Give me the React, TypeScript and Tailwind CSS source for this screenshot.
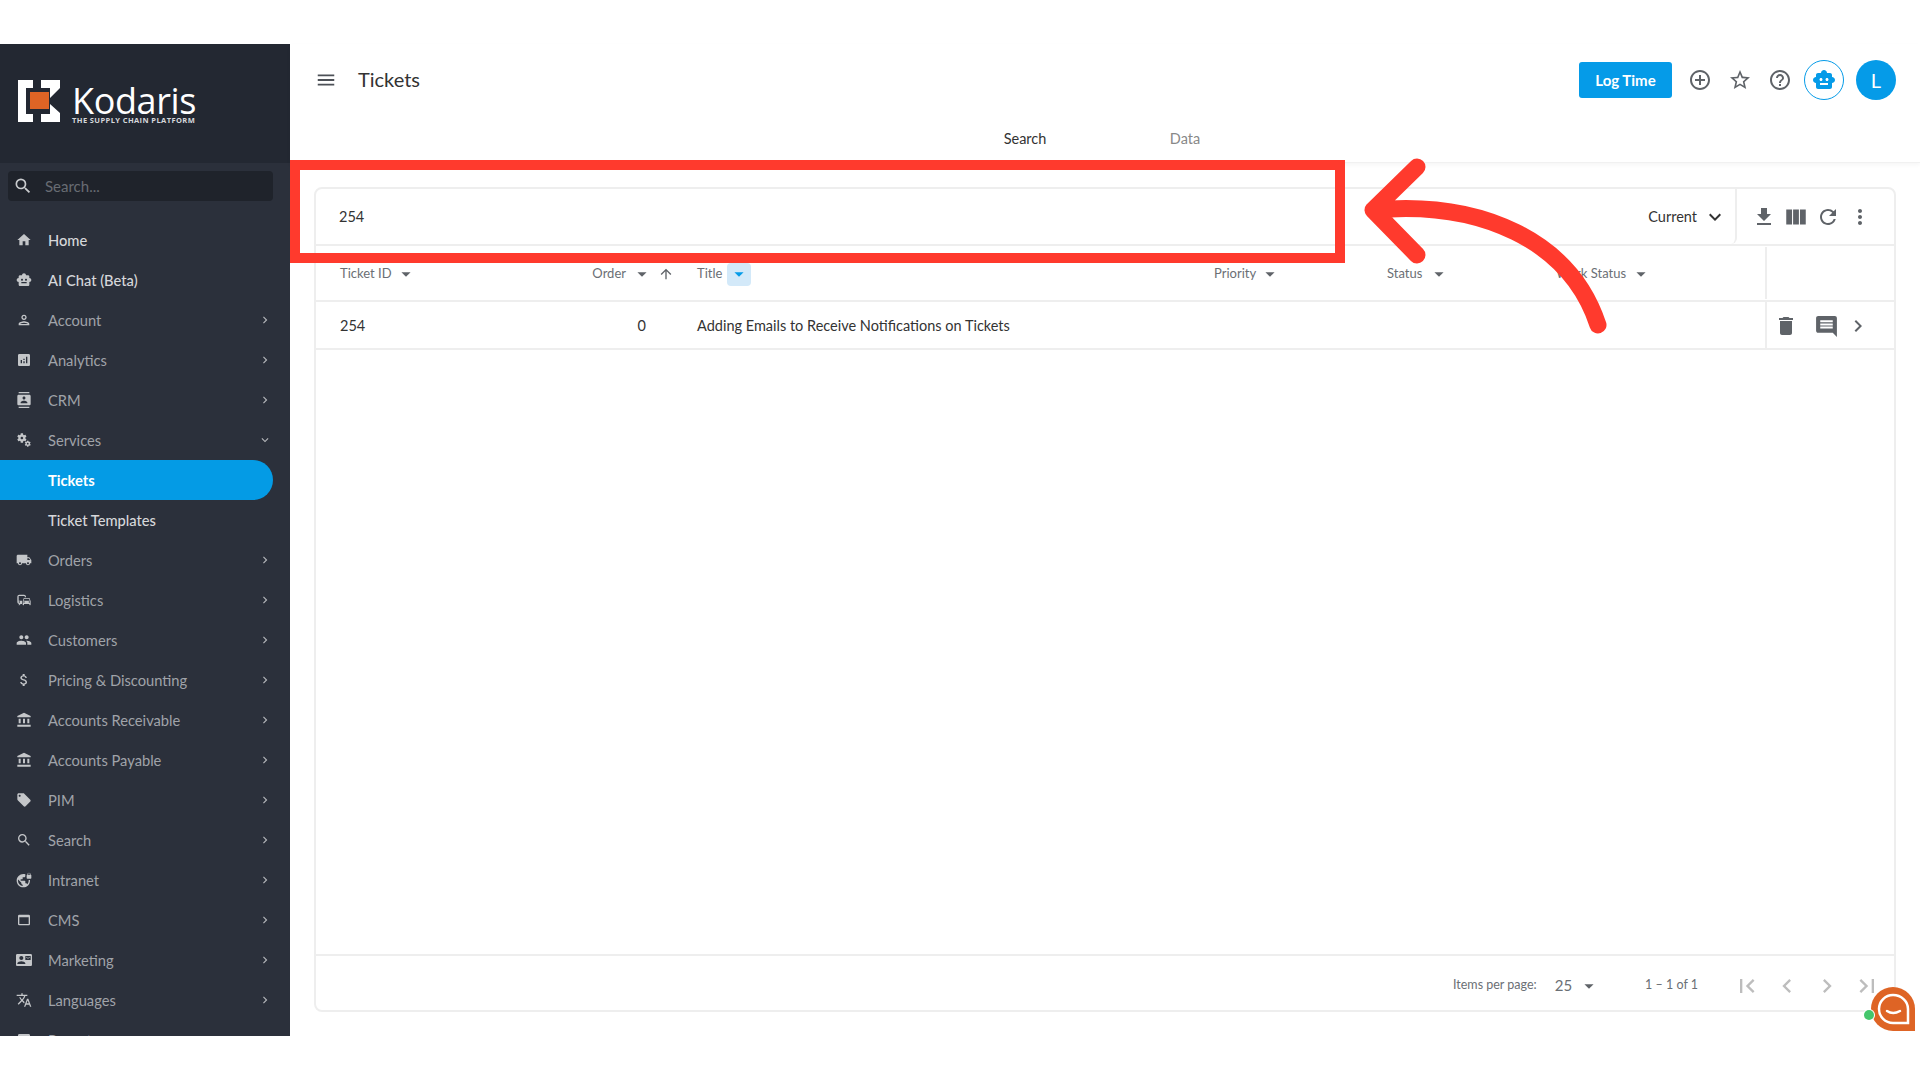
import {
  MdAccountBalance,
  MdAddCircleOutline,
  MdAnalytics,
  MdArrowDropDown,
  MdArrowUpward,
  MdAttachMoney,
  MdChevronLeft,
  MdChevronRight,
  MdComment,
  MdCommute,
  MdContactMail,
  MdContacts,
  MdDelete,
  MdFileDownload,
  MdFirstPage,
  MdHelpOutline,
  MdHome,
  MdKeyboardArrowDown,
  MdLastPage,
  MdLocalOffer,
  MdLocalShipping,
  MdMenu,
  MdMiscellaneousServices,
  MdMoreVert,
  MdOutlinePerson,
  MdOutlineWebAsset,
  MdPeople,
  MdRefresh,
  MdSearch,
  MdSmartToy,
  MdStarBorder,
  MdTranslate,
  MdViewColumn,
  MdVpnLock,
} from "react-icons/md";
import type { IconType } from "react-icons";

type NavItem = { label: string; icon?: IconType; strong?: boolean; active?: boolean; open?: boolean; arrow?: boolean };

const nav: NavItem[] = [
  { label: "Home", icon: MdHome, strong: true },
  { label: "AI Chat (Beta)", icon: MdSmartToy, strong: true },
  { label: "Account", icon: MdOutlinePerson, arrow: true },
  { label: "Analytics", icon: MdAnalytics, arrow: true },
  { label: "CRM", icon: MdContacts, arrow: true },
  { label: "Services", icon: MdMiscellaneousServices, arrow: true, open: true },
  { label: "Tickets", active: true },
  { label: "Ticket Templates", strong: true },
  { label: "Orders", icon: MdLocalShipping, arrow: true },
  { label: "Logistics", icon: MdCommute, arrow: true },
  { label: "Customers", icon: MdPeople, arrow: true },
  { label: "Pricing & Discounting", icon: MdAttachMoney, arrow: true },
  { label: "Accounts Receivable", icon: MdAccountBalance, arrow: true },
  { label: "Accounts Payable", icon: MdAccountBalance, arrow: true },
  { label: "PIM", icon: MdLocalOffer, arrow: true },
  { label: "Search", icon: MdSearch, arrow: true },
  { label: "Intranet", icon: MdVpnLock, arrow: true },
  { label: "CMS", icon: MdOutlineWebAsset, arrow: true },
  { label: "Marketing", icon: MdContactMail, arrow: true },
  { label: "Languages", icon: MdTranslate, arrow: true },
  { label: "Reports", icon: MdAnalytics, arrow: true },
];

function Logo() {
  return (
    <div className="flex items-start pl-[18px] pt-[36px]">
      <svg width="44" height="43" viewBox="0 0 44 43">
        <path fill="#fff" d="M0 0H15V8H8V34H15V42H0Z" />
        <path fill="#fff" d="M23 0H42V8L32 18V8H23Z" />
        <path fill="#fff" d="M32 24L42 33V42H23V34H32Z" />
        <rect x="12" y="12" width="19" height="17" fill="#de6425" />
      </svg>
      <div className="ml-[10px] mt-[6px] flex flex-col">
        <span className="text-[36px] leading-[30px] text-white tracking-[-0.4px] [font-family:'Open_Sans',sans-serif]">Kodaris</span>
        <span className="text-[7.5px] leading-[8px] font-bold text-[#d5d7da] tracking-[0.4px] whitespace-nowrap [font-family:'Open_Sans',sans-serif]">THE SUPPLY CHAIN PLATFORM</span>
      </div>
    </div>
  );
}

function Sidebar() {
  return (
    <aside className="w-[290px] h-full shrink-0 bg-[#2b303b] overflow-hidden">
      <div className="h-[119px] bg-[#232832]">
        <Logo />
      </div>
      <div className="mx-[8px] mt-[8px] mb-[19px] h-[30px] w-[265px] rounded bg-[#1f232b] flex items-center">
        <MdSearch className="ml-[5px] text-[20px] text-[#c9cbce]" />
        <span className="ml-[12px] text-[15px] text-[#686c73]">Search...</span>
      </div>
      {nav.map((item) => {
        const Icon = item.icon;
        return (
          <div
            key={item.label}
            className={
              item.active
                ? "h-[40px] w-[273px] flex items-center rounded-r-full bg-[#049be5] text-white font-bold"
                : item.strong
                  ? "h-[40px] w-[273px] flex items-center text-[#d6d7da] font-medium"
                  : "h-[40px] w-[273px] flex items-center text-[#a0a3a9]"
            }
          >
            <div className="w-[48px] pl-[16px] shrink-0">
              {Icon && <Icon className="text-[16px] text-[#c4c6c9]" />}
            </div>
            <span className="flex-1 pt-[1px] text-[14.7px] whitespace-nowrap">{item.label}</span>
            {item.arrow &&
              (item.open ? (
                <MdKeyboardArrowDown className="text-[14px] text-[#b4b6ba] mr-[1px]" />
              ) : (
                <MdChevronRight className="text-[14px] text-[#b4b6ba] mr-[1px]" />
              ))}
          </div>
        );
      })}
    </aside>
  );
}

function Header() {
  return (
    <header className="h-[119px] shrink-0 border-b border-[#f1f1f1] shadow-[0_2px_4px_rgba(0,0,0,0.04)]">
      <div className="h-[72px] flex items-center pl-[25px] pr-[24px]">
        <MdMenu className="text-[22px] text-[#4d5157]" />
        <h1 className="ml-[21px] mb-[2px] text-[20px] text-[#333] flex-1">Tickets</h1>
        <button className="h-[36px] w-[93px] rounded-[3px] bg-[#059be8] text-white text-[15px] font-bold">Log Time</button>
        <div className="ml-[8px] w-[40px] flex justify-center"><MdAddCircleOutline className="text-[24px] text-[#5f6368]" /></div>
        <div className="w-[40px] flex justify-center"><MdStarBorder className="text-[24px] text-[#5f6368]" /></div>
        <div className="w-[40px] flex justify-center"><MdHelpOutline className="text-[24px] text-[#5f6368]" /></div>
        <div className="ml-[4px] h-[40px] w-[40px] rounded-full border border-[#059be8] flex items-center justify-center">
          <MdSmartToy className="text-[24px] text-[#059be8]" />
        </div>
        <div className="ml-[12px] h-[40px] w-[40px] rounded-full bg-[#059be8] text-white text-[20px] flex items-center justify-center">L</div>
      </div>
      <div className="h-[46px] flex items-center text-[14.5px]">
        <div className="ml-[675px] w-[120px] text-center text-[#333]">Search</div>
        <div className="ml-[40px] w-[120px] text-center text-[#888]">Data</div>
      </div>
    </header>
  );
}

const columns = "grid grid-cols-[211px_161px_516px_174px_168px_219px_129px]";

function HeadCell({ label, className, gap }: { label: string; className?: string; gap: string }) {
  return (
    <div className={`flex items-center ${className ?? ""}`}>
      <span>{label}</span>
      <MdArrowDropDown className={`text-[22px] text-[#5f6368] ${gap}`} />
    </div>
  );
}

function Card() {
  return (
    <section className="mt-[24px] ml-[24px] w-[1582px] h-[825px] border-2 border-[#eeeeee] rounded-lg flex flex-col">
      {/* toolbar */}
      <div className="h-[57px] shrink-0 flex border-b-2 border-[#eeeeee]">
        <div className="flex-1 flex items-center pt-[1px] pl-[23px] pr-[8px] border-r-2 border-[#eeeeee] rounded-br-md text-[14.5px] text-[#333]">
          <span className="flex-1">254</span>
          <span>Current</span>
          <MdKeyboardArrowDown className="ml-[6px] text-[24px] text-[#333]" />
        </div>
        <div className="w-[157px] flex items-center pt-[1px] pl-[11px] text-[#5f6368]">
          <MdFileDownload className="text-[24px] w-[32px]" />
          <MdViewColumn className="text-[26px] w-[32px]" />
          <MdRefresh className="text-[24px] w-[32px]" />
          <MdMoreVert className="text-[24px] w-[32px]" />
        </div>
      </div>
      {/* column headers */}
      <div className={`${columns} h-[56px] shrink-0 items-center pt-[2px] border-b-2 border-[#eeeeee] text-[13px] text-[#6b6f75]`}>
        <HeadCell label="Ticket ID" className="pl-[24px]" gap="ml-[3px]" />
        <div className="flex items-center justify-end pr-[14px]">
          <span>Order</span>
          <MdArrowDropDown className="ml-[5px] text-[22px] text-[#5f6368]" />
          <MdArrowUpward className="ml-[5px] text-[16px] text-[#5f6368]" />
        </div>
        <div className="flex items-center pl-[9px]">
          <span>Title</span>
          <div className="ml-[5px] h-[23px] w-[24px] rounded bg-[#d3e9f9] flex items-center justify-center">
            <MdArrowDropDown className="text-[22px] text-[#059be8]" />
          </div>
        </div>
        <HeadCell label="Priority" className="pl-[10px]" gap="ml-[3px]" />
        <HeadCell label="Status" className="pl-[9px]" gap="ml-[6px]" />
        <HeadCell label="Work Status" className="pl-[10px]" gap="ml-[4px]" />
        <div className="h-full -mt-[2px] border-l-2 border-[#eeeeee]" />
      </div>
      {/* data row */}
      <div className={`${columns} h-[48px] shrink-0 items-center border-b-2 border-[#eeeeee] text-[14.5px] text-[#333]`}>
        <div className="pl-[24px] pt-[1px]">254</div>
        <div className="text-right pr-[42px] pt-[1px]">0</div>
        <div className="col-span-4 pl-[9px] pt-[1px]">Adding Emails to Receive Notifications on Tickets</div>
        <div className="h-full border-l-2 border-[#eeeeee] flex items-center pt-[2px] text-[#5f6368] pl-[7px]">
          <MdDelete className="text-[24px]" />
          <MdComment className="ml-[16px] text-[25px]" />
          <MdChevronRight className="ml-[7px] text-[24px]" />
        </div>
      </div>
      <div className="flex-1" />
      {/* pagination */}
      <div className="h-[56px] shrink-0 border-t-2 border-[#eeeeee] flex items-center pt-[5px] text-[#6b6f75]">
        <span className="ml-[1137px] text-[12.5px]">Items per page:</span>
        <span className="ml-[18px] text-[15px]">25</span>
        <MdArrowDropDown className="ml-[6px] text-[22px] text-[#5f6368]" />
        <span className="ml-[45px] text-[12.5px]">1 – 1 of 1</span>
        <div className="ml-[29px] flex text-[#bdbdbd]">
          <MdFirstPage className="text-[28px] w-[40px]" />
          <MdChevronLeft className="text-[28px] w-[40px]" />
          <MdChevronRight className="text-[28px] w-[40px]" />
          <MdLastPage className="text-[28px] w-[40px]" />
        </div>
      </div>
    </section>
  );
}

// red callout drawn over the screenshot
function Annotation() {
  return (
    <svg className="absolute left-0 top-0 pointer-events-none" width="1920" height="1080" viewBox="0 0 1920 1080" fill="none">
      <path stroke="#ff3a2d" strokeWidth="10" d="M295 165H1340V258H295Z" />
      <path stroke="#ff3a2d" strokeWidth="17" strokeLinecap="round" strokeLinejoin="round" d="M1417 167L1373 210L1417 255M1373 210C1480 200 1570 240 1598 325" />
    </svg>
  );
}

function ChatWidget() {
  return (
    <svg className="absolute left-[1864px] top-[987px]" width="52" height="44" viewBox="0 0 52 44">
      <path fill="#de6425" d="M29 0A22 22 0 0 0 7 22A22 22 0 0 0 29 44H51V22A22 22 0 0 0 29 0Z" />
      <path fill="none" stroke="#fff" strokeWidth="2.5" d="M29 8A14 14 0 0 0 15 22A14 14 0 0 0 29 36H44V22A15 14 0 0 0 29 8Z" />
      <path fill="none" stroke="#fff" strokeWidth="2.5" strokeLinecap="round" d="M23 24Q29 28 36 24" />
      <circle cx="5" cy="28" r="6" fill="#fff" />
      <circle cx="5" cy="28" r="5" fill="#45c66c" />
    </svg>
  );
}

export default function App() {
  return (
    <div className="relative w-[1920px] h-[1080px] bg-white overflow-hidden [font-family:Lato,sans-serif]">
      <div className="h-[44px]" />
      <div className="h-[992px] flex">
        <Sidebar />
        <main className="flex-1 flex flex-col">
          <Header />
          <Card />
        </main>
      </div>
      <Annotation />
      <ChatWidget />
    </div>
  );
}
